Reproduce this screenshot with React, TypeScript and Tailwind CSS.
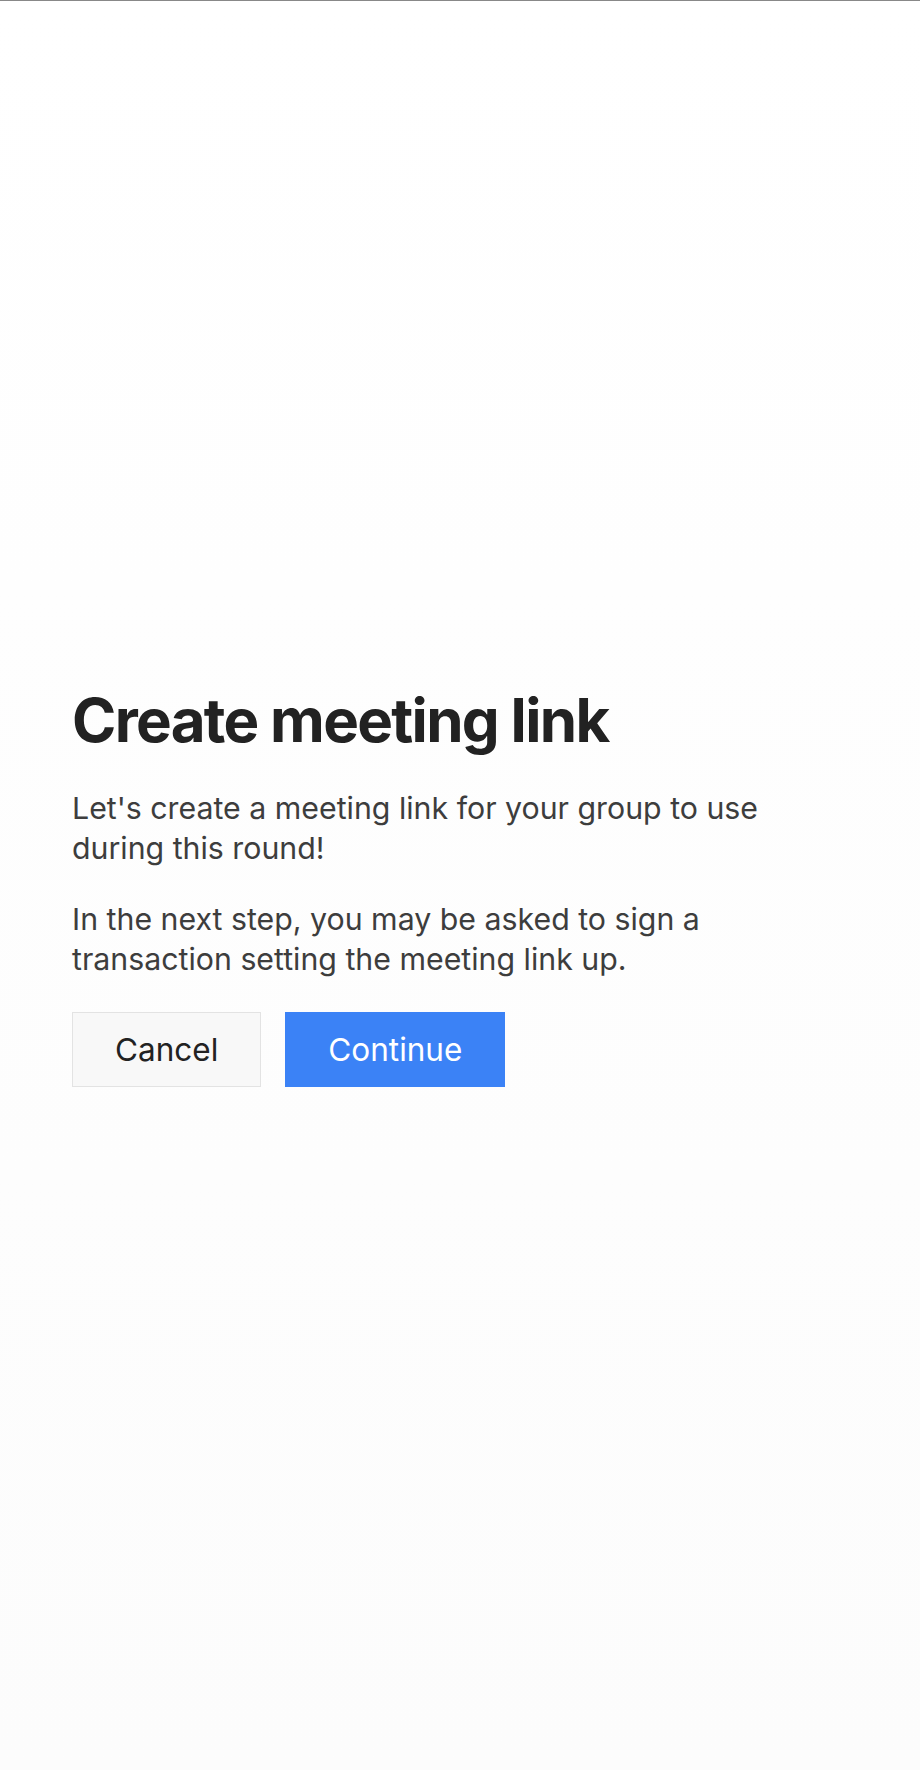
export default function App() {
  return (
    <div
      className="min-h-screen flex flex-col justify-center border-t border-[#888888] bg-gradient-to-b from-white to-[#fcfcfc] px-[72px]"
      style={{ fontFamily: 'Inter, "Noto Sans", sans-serif' }}
    >
      <div className="flex flex-col">
        <h1 className="text-[60px] leading-[72px] font-bold tracking-[-0.028em] text-[#222222]">
          Create meeting link
        </h1>
        <p className="mt-[32px] max-w-[776px] text-[30.3px] leading-[40px] text-[#3d3d3d]">
          Let's create a meeting link for your group to use during this round!
        </p>
        <p className="mt-[31px] max-w-[776px] text-[30.3px] leading-[40px] text-[#3d3d3d]">
          In the next step, you may be asked to sign a transaction setting the meeting link up.
        </p>
        <div className="mt-[33px] flex gap-[24px]">
          <button className="h-[75px] px-[42px] border border-[#e3e3e3] bg-[#f8f8f8] text-[31.5px] text-[#222222]">
            Cancel
          </button>
          <button className="h-[75px] px-[42px] border border-[#3b82f6] bg-[#3b82f6] text-[31.5px] text-white">
            Continue
          </button>
        </div>
      </div>
    </div>
  );
}
